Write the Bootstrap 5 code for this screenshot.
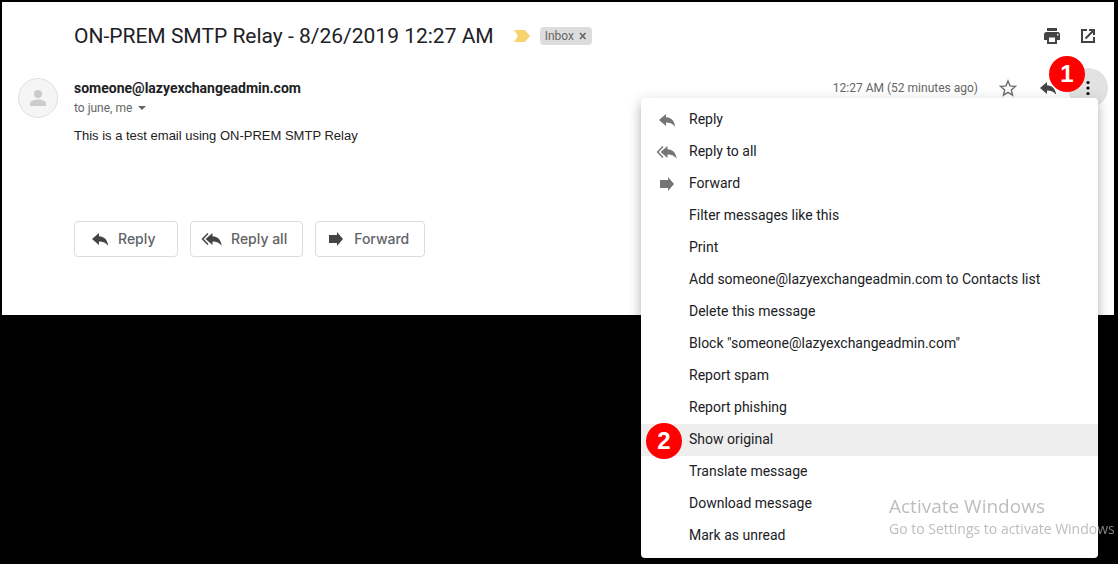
<!DOCTYPE html>
<html lang="en">
<head>
<meta charset="utf-8">
<meta name="viewport" content="width=device-width, initial-scale=1">
<title>ON-PREM SMTP Relay - 8/26/2019 12:27 AM</title>
<link href="https://cdn.jsdelivr.net/npm/bootstrap@5.3.0/dist/css/bootstrap.min.css" rel="stylesheet">
<style>
body { background: #000; font-family: Roboto, sans-serif; color: #202124; padding: 2px 4px 0 2px; }
.mail-view { background: #fff; padding: 14px 6px 58px 16px; }
.gutter { width: 56px; }
.subject { font-size: 21px; line-height: 32px; }
.inbox-label { background: #ddd; color: #666; font-size: 12px; line-height: 18px; border-radius: 4px; padding: 0 5px; }
.plain { border: 0; background: none; padding: 0; color: inherit; line-height: inherit; }
.icon-btn { width: 20px; height: 20px; color: #444; display: flex; }
.head-tools { gap: 16px; padding-right: 10px; }
.sender-row { padding-top: 22px; }
.sender-tools { gap: 20px; }
.avatar { width: 40px; height: 40px; border: 1px solid #e0e0e0; background: #f5f5f5; color: #ccc; }
.sender { font-size: 14px; line-height: 20px; font-weight: 700; }
.muted { font-size: 12px; color: #666; }
.recipients { line-height: 20px; }
.mail-text { font: 13px/20px "Liberation Sans", sans-serif; color: #222; padding-top: 8px; }
.actions { gap: 12px; padding-top: 75px; }
.action-btn { border: 1px solid #dadce0; border-radius: 4px; background: #fff; color: #5f6368; min-width: 104px; height: 36px; padding: 0 15px; gap: 8px; font-family: Inter, sans-serif; font-size: 14px; font-weight: 500; line-height: 20px; }
.action-btn.wide { padding-left: 10px; }
.action-btn svg { color: #444; }
.more-wrap { width: 40px; height: 40px; margin: -10px 0 -10px -10px; }
.more-btn { width: 40px; height: 40px; background: #e2e2e2; color: #000; }
.marker { background: #f00; color: #fff; width: 36px; height: 36px; font: 700 24px/36px "Liberation Sans", sans-serif; z-index: 1100; }
.marker-one { top: -12px; left: -19px; }
.marker-two { top: -1px; left: 5px; }
.mail-menu { top: 30px; right: 10px; width: 457px; padding: 6px 0; border: 0; border-radius: 4px; box-shadow: 0 8px 10px 1px rgba(0,0,0,.14), 0 3px 14px 2px rgba(0,0,0,.12), 0 5px 5px -3px rgba(0,0,0,.2); }
.mail-menu .dropdown-item { font-size: 14px; line-height: 20px; min-height: 32px; padding: 0 16px; gap: 12px; color: #202124; display: flex; align-items: center; }
.pic { width: 20px; display: flex; justify-content: center; color: #757575; }
.pic svg { flex-shrink: 0; }
.item-text { padding-bottom: 2px; }
.mail-menu .dropdown-item:hover, .mail-menu .dropdown-item.current { background: #eee; }
.watermark { right: 0; bottom: 25px; width: 229px; font-family: "Open Sans", sans-serif; color: rgba(169,169,169,.77); z-index: 1200; pointer-events: none; }
.watermark-title { font-size: 19px; line-height: 26px; }
.watermark-text { font-size: 14px; line-height: 20px; }
</style>
</head>
<body class="min-vh-100">
<svg class="d-none" aria-hidden="true">
  <symbol id="reply" viewBox="0 0 20 20"><path fill="currentColor" d="M9 4v3.300c5.200.2 8.400 3.400 9.200 9.400-2-2.900-5-4.300-9.200-4.300v3.500L2 10z"/></symbol>
  <symbol id="reply-all" viewBox="1 0 22 20"><path fill="currentColor" d="M12.500 4v3.300c5.200.2 8.400 3.400 9.200 9.400-2-2.900-5-4.300-9.200-4.300v3.500l-7-5.900z"/><path fill="none" stroke="currentColor" stroke-width="1.500" d="M8 4.500 2.600 10 8 15.500"/></symbol>
  <symbol id="forward" viewBox="0 0 20 20"><path fill="currentColor" d="M3 6h8V3l6 7-6 7v-3H3z"/></symbol>
</svg>
<main class="mail-view">
  <header class="d-flex align-items-center">
    <div class="gutter flex-shrink-0"></div>
    <h1 class="subject fw-normal mb-0 pt-1 text-nowrap">ON-PREM SMTP Relay - 8/26/2019 12:27 AM</h1>
    <svg class="mt-1 ms-3 flex-shrink-0" width="22" height="20" viewBox="0 0 22 20" aria-label="Important"><path fill="#f7d36f" d="M4 4h11l5 6-5 6H4l4-6z"/></svg>
    <span class="inbox-label d-flex align-items-center gap-1 mt-1 ms-2">Inbox
      <button class="plain d-flex" type="button" aria-label="Remove label"><svg width="9" height="8" viewBox="0 0 9 8"><path d="m2 1 5.500 6m0-6L2 7" stroke="#666" stroke-width="1.600"/></svg></button>
    </span>
    <div class="head-tools d-flex ms-auto mt-1">
      <button class="plain icon-btn" type="button" aria-label="Print"><svg width="20" height="20" viewBox="0 0 20 20"><path fill="currentColor" d="M5 2h10v3H5zM4.500 6h11A2.500 2.500 0 0 1 18 8.500V14h-3v4H5v-4H2V8.500A2.500 2.500 0 0 1 4.500 6zM7 11.500V16h6v-4.500zM15 8v1.500h1.500V8z"/></svg></button>
      <button class="plain icon-btn" type="button" aria-label="Open in new window"><svg width="20" height="20" viewBox="0 0 20 20"><path fill="none" stroke="currentColor" stroke-width="2" d="M9 4H4v12h12v-5M11 4h5v5M16 4l-8.500 8.500"/></svg></button>
    </div>
  </header>
  <section class="sender-row d-flex align-items-start">
    <div class="gutter flex-shrink-0"><div class="avatar rounded-circle d-flex align-items-center justify-content-center mt-1"><svg width="20" height="20" viewBox="0 0 20 20"><circle cx="10" cy="6" r="4" fill="currentColor"/><path fill="currentColor" d="M2 18v-2.500c0-3 5-4 8-4s8 1 8 4V18z"/></svg></div></div>
    <div class="flex-grow-1 pt-1">
      <div class="d-flex align-items-center">
        <strong class="sender">someone@lazyexchangeadmin.com</strong>
        <div class="sender-tools d-flex align-items-center ms-auto">
          <time class="muted">12:27 AM (52 minutes ago)</time>
          <button class="plain icon-btn" type="button" aria-label="Star"><svg width="20" height="20" viewBox="0 0 20 20"><path fill="none" stroke="#757575" stroke-width="1.500" d="m10 3 2 4.900 5.400.5-4.100 3.500 1.200 5.200L10 14.300l-4.500 2.800 1.200-5.200-4.100-3.500L8 7.900z"/></svg></button>
          <button class="plain icon-btn" type="button" aria-label="Reply"><svg width="20" height="20"><use href="#reply"/></svg></button>
          <div class="more-wrap dropdown position-relative">
            <button class="plain more-btn rounded-circle d-flex align-items-center justify-content-center" type="button" aria-label="More" aria-expanded="true"><svg width="20" height="20" viewBox="0 0 20 20"><circle cx="10" cy="4.500" r="1.600"/><circle cx="10" cy="10" r="1.600"/><circle cx="10" cy="15.500" r="1.600"/></svg></button>
            <span class="marker marker-one position-absolute rounded-circle text-center">1</span>
            <ul class="dropdown-menu mail-menu show">
              <li><a class="dropdown-item" href="#"><span class="pic"><svg width="20" height="20"><use href="#reply"/></svg></span><span class="item-text">Reply</span></a></li>
              <li><a class="dropdown-item" href="#"><span class="pic"><svg width="22" height="20"><use href="#reply-all"/></svg></span><span class="item-text">Reply to all</span></a></li>
              <li><a class="dropdown-item" href="#"><span class="pic"><svg width="20" height="20"><use href="#forward"/></svg></span><span class="item-text">Forward</span></a></li>
              <li><a class="dropdown-item" href="#"><span class="pic"></span><span class="item-text">Filter messages like this</span></a></li>
              <li><a class="dropdown-item" href="#"><span class="pic"></span><span class="item-text">Print</span></a></li>
              <li><a class="dropdown-item" href="#"><span class="pic"></span><span class="item-text">Add someone@lazyexchangeadmin.com to Contacts list</span></a></li>
              <li><a class="dropdown-item" href="#"><span class="pic"></span><span class="item-text">Delete this message</span></a></li>
              <li><a class="dropdown-item" href="#"><span class="pic"></span><span class="item-text">Block "someone@lazyexchangeadmin.com"</span></a></li>
              <li><a class="dropdown-item" href="#"><span class="pic"></span><span class="item-text">Report spam</span></a></li>
              <li><a class="dropdown-item" href="#"><span class="pic"></span><span class="item-text">Report phishing</span></a></li>
              <li class="position-relative"><a class="dropdown-item current" href="#"><span class="pic"></span><span class="item-text">Show original</span></a><span class="marker marker-two position-absolute rounded-circle text-center">2</span></li>
              <li><a class="dropdown-item" href="#"><span class="pic"></span><span class="item-text">Translate message</span></a></li>
              <li><a class="dropdown-item" href="#"><span class="pic"></span><span class="item-text">Download message</span></a></li>
              <li><a class="dropdown-item" href="#"><span class="pic"></span><span class="item-text">Mark as unread</span></a></li>
            </ul>
          </div>
        </div>
      </div>
      <div class="muted recipients d-flex align-items-center gap-1">to june, me
        <button class="plain d-flex" type="button" aria-label="Show details"><svg width="12" height="8" viewBox="0 0 12 8"><path fill="#666" d="M2 2h8L6 6z"/></svg></button>
      </div>
      <div class="mail-text">This is a test email using ON-PREM SMTP Relay</div>
      <div class="actions d-flex">
        <button class="action-btn d-flex align-items-center" type="button"><svg width="20" height="20"><use href="#reply"/></svg>Reply</button>
        <button class="action-btn wide d-flex align-items-center" type="button"><svg width="22" height="20"><use href="#reply-all"/></svg>Reply all</button>
        <button class="action-btn wide d-flex align-items-center" type="button"><svg width="20" height="20"><use href="#forward"/></svg>Forward</button>
      </div>
    </div>
  </section>
</main>
<aside class="watermark position-fixed text-nowrap">
  <div class="watermark-title">Activate Windows</div>
  <div class="watermark-text">Go to Settings to activate Windows</div>
</aside>
<script src="https://cdn.jsdelivr.net/npm/bootstrap@5.3.0/dist/js/bootstrap.bundle.min.js"></script>
</body>
</html>
